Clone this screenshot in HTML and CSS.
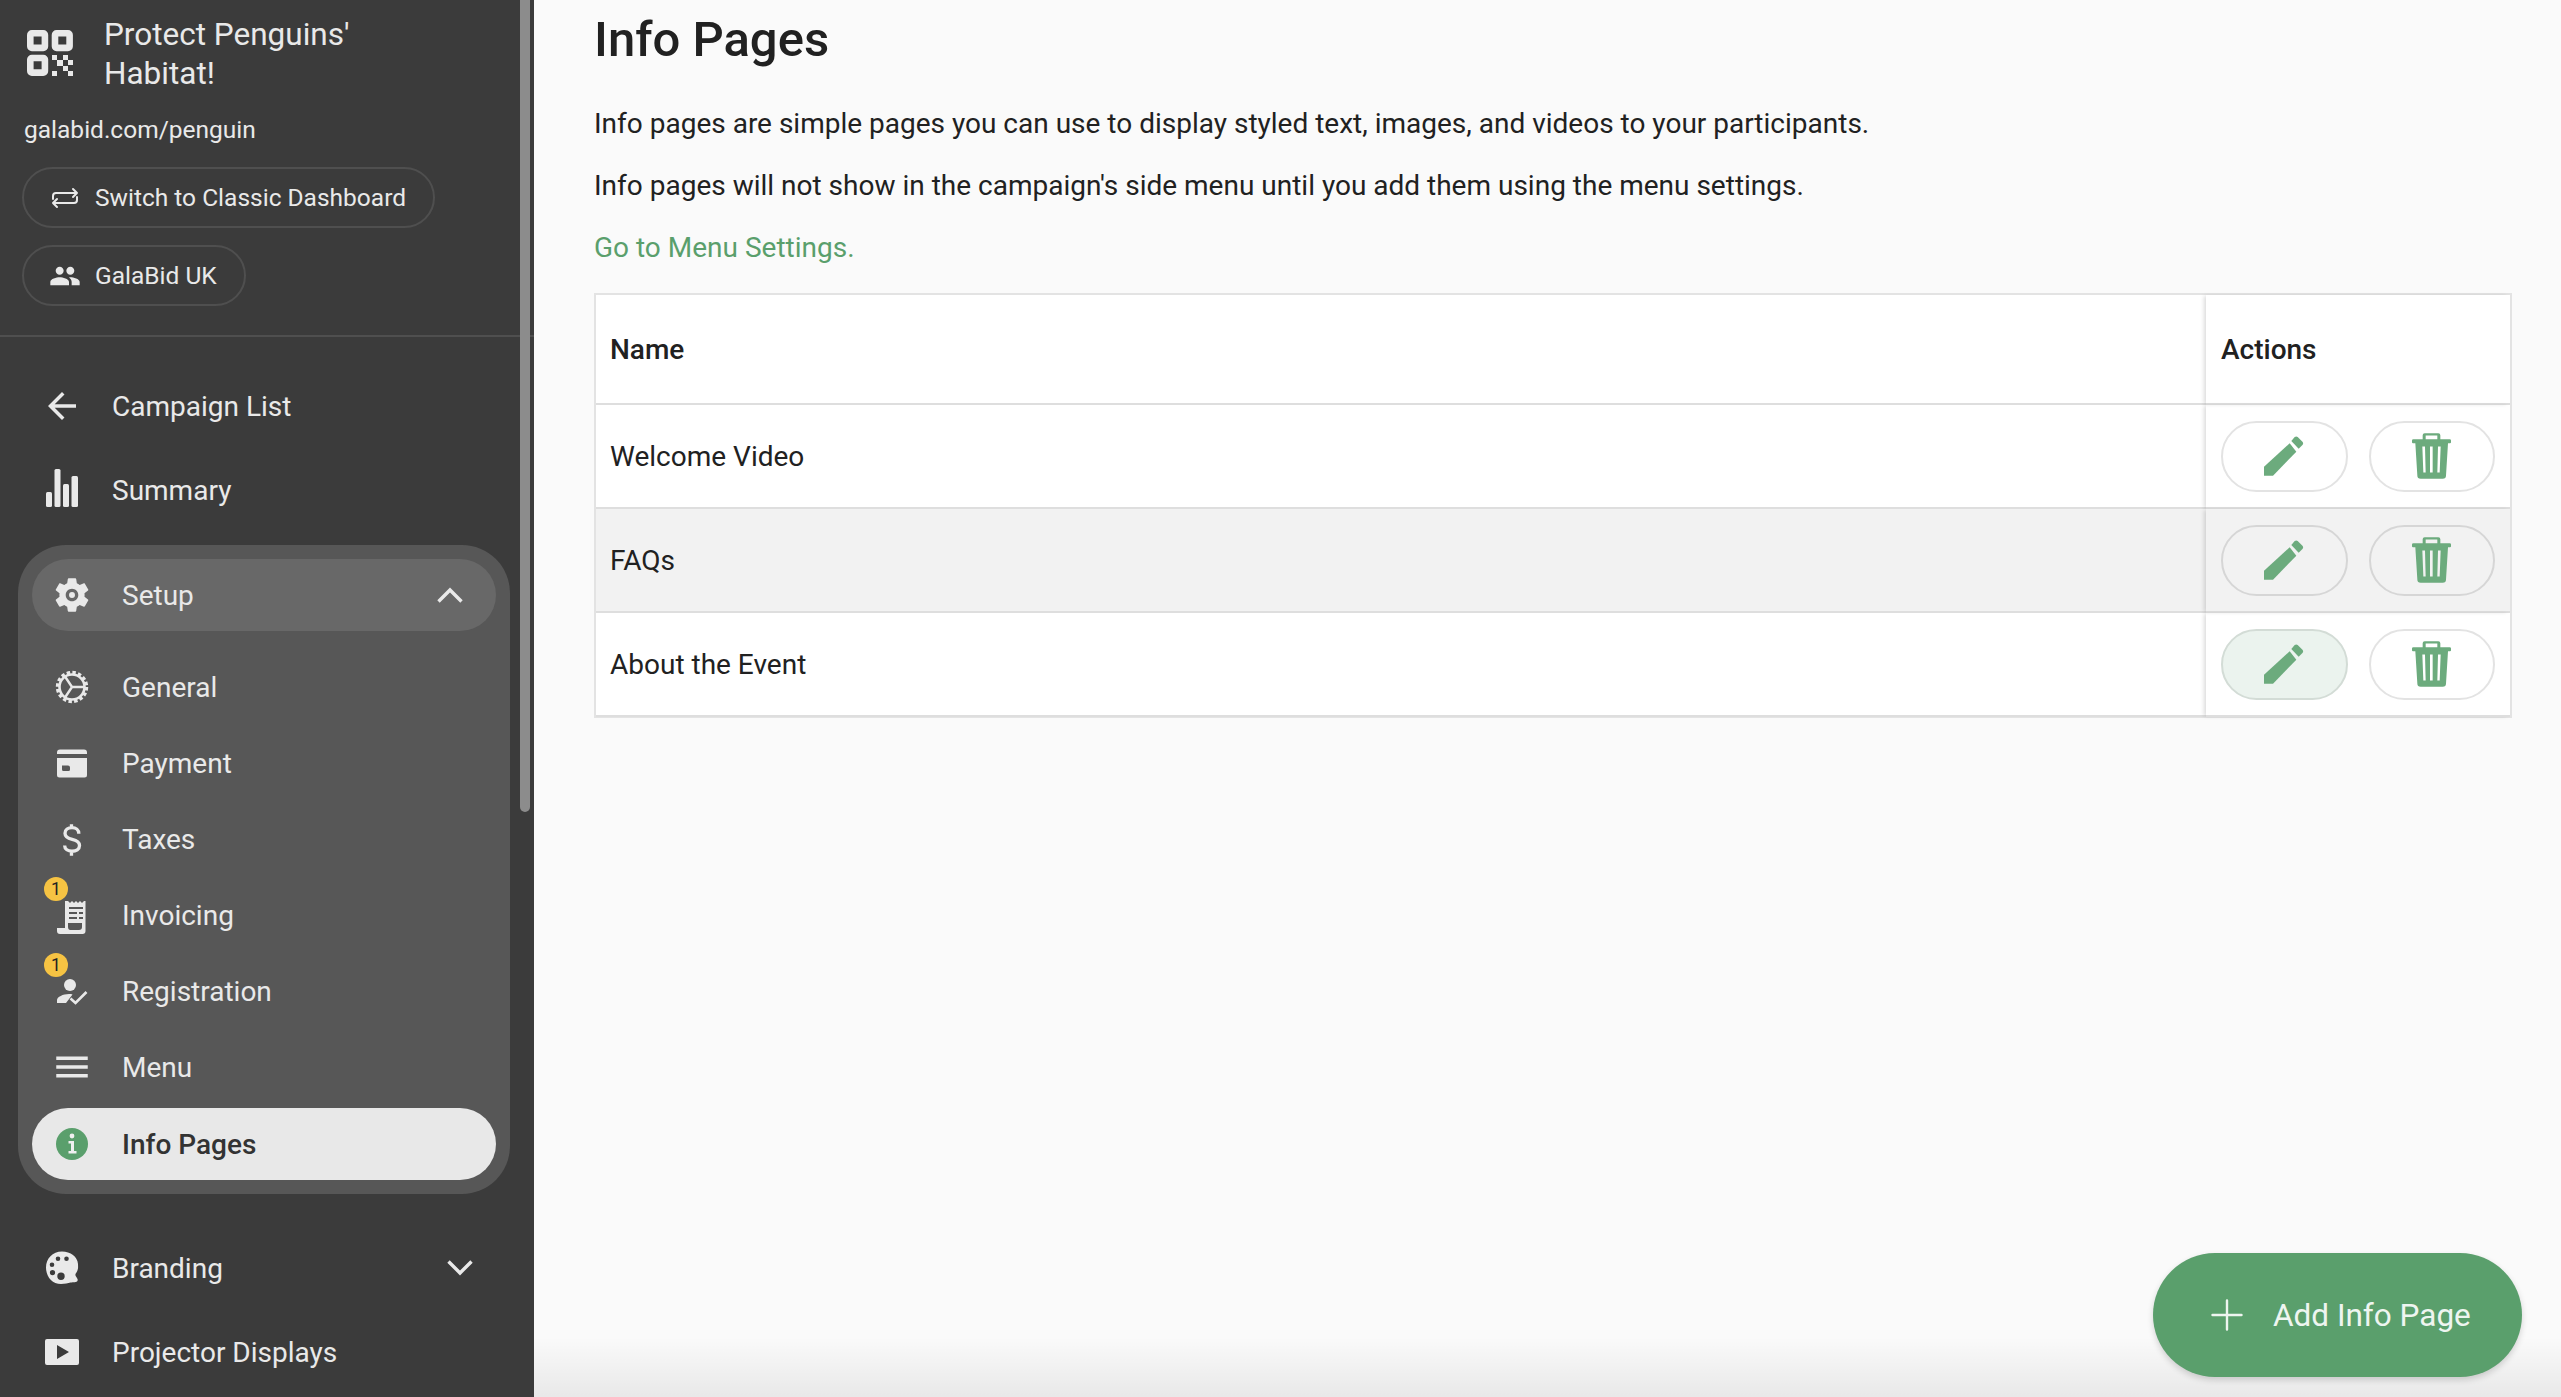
FILE: index.html
```html
<!DOCTYPE html>
<html lang="en">
<head>
<meta charset="utf-8">
<title>Info Pages</title>
<link rel="stylesheet" href="styles.css">
</head>
<body>
<div class="app">
  <aside class="sidebar">
    <div class="thumb"></div>
    <header class="brand">
      <svg class="qr" viewBox="0 0 46 46" fill="none" stroke="currentColor" stroke-width="6.6">
        <rect x="3.3" y="3.3" width="14.6" height="14.6" rx="1.6"/>
        <rect x="28" y="3.3" width="14.6" height="14.6" rx="1.6"/>
        <rect x="3.3" y="28" width="14.6" height="14.6" rx="1.6"/>
        <g fill="currentColor" stroke="none">
          <rect x="25" y="25" width="5" height="5"/><rect x="30" y="30" width="6" height="6"/><rect x="36" y="25" width="5" height="5"/>
          <rect x="41" y="25" width="5" height="0"/><rect x="25" y="41" width="5" height="5"/><rect x="36" y="36" width="5" height="5"/><rect x="41" y="41" width="5" height="5"/><rect x="41" y="30" width="5" height="5"/>
        </g>
      </svg>
      <div class="brand-title">Protect Penguins' Habitat!</div>
    </header>
    <div class="url">galabid.com/penguin</div>
    <div class="pills">
      <a class="pill">
        <svg class="pill-icon" viewBox="0 0 32 24" fill="none" stroke="currentColor" stroke-width="2" stroke-linecap="round" stroke-linejoin="round">
          <path d="M4 13v-3a3 3 0 0 1 3-3h21M24 3l4 4-4 4"/>
          <path d="M28 11v3a3 3 0 0 1-3 3H4M8 13l-4 4 4 4"/>
        </svg>
        <span>Switch to Classic Dashboard</span>
      </a>
      <a class="pill">
        <svg class="pill-icon" viewBox="0 0 24 24" fill="currentColor"><path d="M16 11c1.66 0 2.99-1.34 2.99-3S17.66 5 16 5c-1.66 0-3 1.34-3 3s1.34 3 3 3zm-8 0c1.66 0 2.99-1.34 2.99-3S9.66 5 8 5C6.34 5 5 6.34 5 8s1.34 3 3 3zm0 2c-2.33 0-7 1.17-7 3.5V19h14v-2.5c0-2.33-4.67-3.5-7-3.5zm8 0c-.29 0-.62.02-.97.05 1.16.84 1.97 1.97 1.97 3.45V19h6v-2.5c0-2.33-4.67-3.5-7-3.5z"/></svg>
        <span>GalaBid UK</span>
      </a>
    </div>
    <nav class="nav">
      <a class="top-item">
        <svg class="icon" viewBox="0 0 24 24" fill="currentColor"><path d="M20 11H7.83l5.59-5.59L12 4l-8 8 8 8 1.41-1.41L7.83 13H20v-2z"/></svg>
        <span>Campaign List</span>
      </a>
      <a class="top-item">
        <svg class="icon" viewBox="0 0 42 42" fill="currentColor"><rect x="5" y="23" width="6" height="15" rx="1.5"/><rect x="13.5" y="0" width="6" height="38" rx="1.5"/><rect x="22" y="15" width="6" height="23" rx="1.5"/><rect x="30.5" y="7" width="6.5" height="31" rx="1.5"/></svg>
        <span>Summary</span>
      </a>
      <section class="group">
        <a class="group-head">
          <svg class="icon" viewBox="0 0 24 24" fill="currentColor"><path d="M19.14 12.94c.04-.3.06-.61.06-.94 0-.32-.02-.64-.07-.94l2.03-1.58c.18-.14.23-.41.12-.61l-1.92-3.32c-.12-.22-.37-.29-.59-.22l-2.39.96c-.5-.38-1.03-.7-1.62-.94l-.36-2.54c-.04-.24-.24-.41-.48-.41h-3.84c-.24 0-.43.17-.47.41l-.36 2.54c-.59.24-1.13.57-1.62.94l-2.39-.96c-.22-.08-.47 0-.59.22L2.74 8.87c-.12.21-.08.47.12.61l2.03 1.58c-.05.3-.09.63-.09.94s.02.64.07.94l-2.03 1.58c-.18.14-.23.41-.12.61l1.92 3.32c.12.22.37.29.59.22l2.39-.96c.5.38 1.03.7 1.62.94l.36 2.54c.05.24.24.41.48.41h3.84c.24 0 .44-.17.47-.41l.36-2.54c.59-.24 1.13-.56 1.62-.94l2.39.96c.22.08.47 0 .59-.22l1.92-3.32c.12-.22.07-.47-.12-.61l-2.01-1.58zM12 15.6c-1.98 0-3.6-1.62-3.6-3.6s1.62-3.6 3.6-3.6 3.6 1.62 3.6 3.6-1.62 3.6-3.6 3.6z"/><circle cx="12" cy="12" r="1.7"/></svg>
          <span class="grow">Setup</span>
          <svg class="chev" viewBox="0 0 26 16" fill="none" stroke="currentColor" stroke-width="3.4"><path d="M1.5 14.5 13 3l11.500 11.500"/></svg>
        </a>
        <div class="sub-list">
          <a class="sub-item">
            <svg class="icon" viewBox="0 0 42 42" fill="none" stroke="currentColor"><circle cx="21" cy="21" r="12.500" stroke-width="2.600"/><circle cx="21" cy="21" r="14.500" stroke-width="3.400" stroke-dasharray="3.400 2.290"/><path d="M21 21 33 21M21 21 14 10.500M21 21 14 31.500" stroke-width="2.400"/></svg>
            <span>General</span>
          </a>
          <a class="sub-item">
            <svg class="icon" viewBox="0 0 42 42" fill="currentColor"><path fill-rule="evenodd" d="M6 10.500a3 3 0 0 1 3-3h24a3 3 0 0 1 3 3V12H6zM6 16h30v17a2.500 2.500 0 0 1-2.500 2.500h-25A2.500 2.500 0 0 1 6 33zM11 23.500v4a1.500 1.500 0 0 0 1.500 1.500h5a1.500 1.500 0 0 0 1.500-1.500v-2a2 2 0 0 0-2-2z"/></svg>
            <span>Payment</span>
          </a>
          <a class="sub-item">
            <svg class="icon" viewBox="0 0 24 24" fill="none" stroke="currentColor" stroke-width="1.900"><path d="M15.900 9c0-2.200-1.700-3.500-3.900-3.500S8 6.700 8 8.700c0 2.300 2 3 4.100 3.500s4.200 1.300 4.200 3.500c0 2.200-2 3.300-4.300 3.300s-4.200-1.200-4.200-3.300M11.700 3.500v2M11.700 19v2.500"/></svg>
            <span>Taxes</span>
          </a>
          <a class="sub-item">
            <span class="badge">1</span>
            <svg class="icon" viewBox="0 0 42 42" fill="currentColor"><path fill-rule="evenodd" d="M14 7h3l2 2 2-2 2 2 2-2 2 2 2-2 2 2 2-2h1.500v30a3 3 0 0 1-3 3H9a3 3 0 0 1-3-3v-3h8zM18 13v2h14v-2zM18 18v2h8v-2zM28 18v2h4v-2zM18 23v2h8v-2zM28 23v2h4v-2zM17 29v3.500c0 1 .3 3.500 2 3.500h9a3 3 0 0 0 3-3V29z"/></svg>
            <span>Invoicing</span>
          </a>
          <a class="sub-item">
            <span class="badge">1</span>
            <svg class="icon" viewBox="0 0 42 42" fill="currentColor"><circle cx="19" cy="15" r="6"/><path d="M6 33v-3c0-3 6-6 12-6 1.500 0 2.500.2 3.500.4L15 33z"/><path d="M19.500 28.500 24.500 33 35.500 22" fill="none" stroke="currentColor" stroke-width="2.600"/></svg>
            <span>Registration</span>
          </a>
          <a class="sub-item">
            <svg class="icon" viewBox="0 0 24 24" fill="currentColor"><path d="M3 18h18v-2H3v2zm0-5h18v-2H3v2zm0-7v2h18V6H3z"/></svg>
            <span>Menu</span>
          </a>
        </div>
        <a class="active-item">
          <svg class="icon" viewBox="0 0 42 42"><circle cx="21" cy="21" r="16" fill="#5a9f6c"/><g fill="#f0f0f0"><circle cx="21" cy="13" r="2.400"/><path d="M17.500 18h5.500v10h2.500v2.500h-8V28H20v-7.500h-2.500z"/></g></svg>
          <span>Info Pages</span>
        </a>
      </section>
      <a class="top-item spaced">
        <svg class="icon" viewBox="0 0 42 42" fill="currentColor"><path fill-rule="evenodd" d="M21 4.500C11.500 4.500 5 11.500 5 20.500S11 37 20 37c4 0 7-1 9.500-1.500 3-.6 6 .2 7-1.800.8-1.600-.8-3-1.800-4.700-.9-1.700.4-2.800 1.300-4.500C37.500 22 37 19 37 17 36.500 9.500 29.500 4.500 21 4.500zM17 9.500a2.300 2.300 0 1 1 0 4.600 2.300 2.300 0 0 1 0-4.600zM25.500 9.500a2.300 2.300 0 1 1 0 4.600 2.300 2.300 0 0 1 0-4.600zM11 15.500a2.300 2.300 0 1 1 0 4.600 2.300 2.300 0 0 1 0-4.600zM11.500 23a2.600 2.600 0 1 1 0 5.200 2.600 2.600 0 0 1 0-5.200zM20 25.500a3.700 3.700 0 1 1 0 7.400 3.700 3.700 0 0 1 0-7.400z"/></svg>
        <span class="grow">Branding</span>
        <svg class="chev" viewBox="0 0 26 16" fill="none" stroke="currentColor" stroke-width="3.400"><path d="M1.500 1.500 13 13 24.500 1.500"/></svg>
      </a>
      <a class="top-item">
        <svg class="icon" viewBox="0 0 42 42" fill="currentColor"><path fill-rule="evenodd" d="M6 8h30a2 2 0 0 1 2 2v22a2 2 0 0 1-2 2H6a2 2 0 0 1-2-2V10a2 2 0 0 1 2-2zM16 14v14l12-7z"/></svg>
        <span>Projector Displays</span>
      </a>
    </nav>
  </aside>

  <main class="main">
    <h1 class="title">Info Pages</h1>
    <p class="copy">Info pages are simple pages you can use to display styled text, images, and videos to your participants.</p>
    <p class="copy">Info pages will not show in the campaign's side menu until you add them using the menu settings.</p>
    <p class="copy"><a class="link">Go to Menu Settings.</a></p>
    <table class="table">
      <thead>
        <tr><th>Name</th><th class="actions">Actions</th></tr>
      </thead>
      <tbody>
        <tr>
          <td>Welcome Video</td>
          <td class="actions"><div class="btns">
            <button class="round"><svg class="pencil" viewBox="0 0 120 120"><path d="M0 92V119H27L97 47 77 22Z"/><path d="M82 15 92 3Q97 0 101 3L116 18Q119 22 116 26L104 38Z"/></svg></button>
            <button class="round"><svg class="trash" viewBox="0 0 117 137"><path fill-rule="evenodd" d="M38 0h41a6 6 0 0 1 6 6v12h28a4 4 0 0 1 4 4v5a3 3 0 0 1-3 3h-6l-6 97a10 10 0 0 1-10 10H26a10 10 0 0 1-10-10L10 30H3a3 3 0 0 1-3-3v-5a4 4 0 0 1 4-4h28V6a6 6 0 0 1 6-6zM41 7v11h35V7zM31 40l3 78h7l-2-78zM54 40v78h8V40zM78 40l-2 78h7l3-78z"/></svg></button>
          </div></td>
        </tr>
        <tr class="shaded">
          <td>FAQs</td>
          <td class="actions"><div class="btns">
            <button class="round"><svg class="pencil" viewBox="0 0 120 120"><path d="M0 92V119H27L97 47 77 22Z"/><path d="M82 15 92 3Q97 0 101 3L116 18Q119 22 116 26L104 38Z"/></svg></button>
            <button class="round"><svg class="trash" viewBox="0 0 117 137"><path fill-rule="evenodd" d="M38 0h41a6 6 0 0 1 6 6v12h28a4 4 0 0 1 4 4v5a3 3 0 0 1-3 3h-6l-6 97a10 10 0 0 1-10 10H26a10 10 0 0 1-10-10L10 30H3a3 3 0 0 1-3-3v-5a4 4 0 0 1 4-4h28V6a6 6 0 0 1 6-6zM41 7v11h35V7zM31 40l3 78h7l-2-78zM54 40v78h8V40zM78 40l-2 78h7l3-78z"/></svg></button>
          </div></td>
        </tr>
        <tr>
          <td>About the Event</td>
          <td class="actions"><div class="btns">
            <button class="round hover"><svg class="pencil" viewBox="0 0 120 120"><path d="M0 92V119H27L97 47 77 22Z"/><path d="M82 15 92 3Q97 0 101 3L116 18Q119 22 116 26L104 38Z"/></svg></button>
            <button class="round"><svg class="trash" viewBox="0 0 117 137"><path fill-rule="evenodd" d="M38 0h41a6 6 0 0 1 6 6v12h28a4 4 0 0 1 4 4v5a3 3 0 0 1-3 3h-6l-6 97a10 10 0 0 1-10 10H26a10 10 0 0 1-10-10L10 30H3a3 3 0 0 1-3-3v-5a4 4 0 0 1 4-4h28V6a6 6 0 0 1 6-6zM41 7v11h35V7zM31 40l3 78h7l-2-78zM54 40v78h8V40zM78 40l-2 78h7l3-78z"/></svg></button>
          </div></td>
        </tr>
      </tbody>
    </table>
    <button class="fab">
      <svg class="plus" viewBox="0 0 32 32" fill="none" stroke="currentColor" stroke-width="2.400" stroke-linecap="round"><path d="M16 1.500v29M1.500 16h29"/></svg>
      <span>Add Info Page</span>
    </button>
  </main>
</div>
</body>
</html>
```

FILE: styles.css
```css
* { box-sizing: border-box; }

html, body {
  margin: 0;
  height: 100%;
  overflow: hidden;
}

body {
  font-family: Roboto, "Liberation Sans", sans-serif;
  font-size: 28px;
  color: #212121;
  background: #fafafa;
}

.app {
  display: flex;
  height: 100vh;
}

/* Sidebar */
.sidebar {
  position: relative;
  flex: none;
  width: 534px;
  height: 100%;
  padding-top: 14px;
  overflow: hidden;
  color: #e9e9e9;
  background: #3b3b3b;
  z-index: 2;
}

.thumb {
  position: absolute;
  top: 0;
  left: 520px;
  width: 10px;
  height: 812px;
  border-radius: 0 0 5px 5px;
  background: #8c8c8c;
  z-index: 3;
}

.brand {
  display: flex;
  align-items: center;
  gap: 31px;
  padding-left: 27px;
  height: 79px;
}

.qr {
  flex: none;
  width: 46px;
  height: 46px;
  margin-top: -1px;
  color: #e9e9e9;
}

.brand-title {
  width: 300px;
  font-size: 31.5px;
  line-height: 39px;
}

.url {
  margin-top: 20px;
  padding-left: 24px;
  font-size: 24.5px;
  line-height: 34px;
}

.pills {
  display: flex;
  flex-direction: column;
  align-items: flex-start;
  gap: 17px;
  margin-top: 20px;
  padding: 0 0 29px 22px;
  border-bottom: 2px solid #4f4f4f;
}

.sidebar .pills {
  margin-right: 0;
}

.pill {
  display: flex;
  align-items: center;
  gap: 14px;
  height: 61px;
  padding: 0 27px 0 25px;
  border: 2px solid #4f4f4f;
  border-radius: 31px;
  font-size: 24.5px;
}

.pill-icon {
  flex: none;
  width: 32px;
  height: 32px;
}

.nav {
  padding-top: 27px;
}

.icon {
  flex: none;
  width: 42px;
  height: 42px;
}

.grow {
  flex: 1;
}

.chev {
  flex: none;
  width: 26px;
  height: 16px;
}

.top-item {
  display: flex;
  align-items: center;
  gap: 29px;
  height: 84px;
  padding: 0 61px 0 41px;
}

.top-item.spaced {
  margin-top: 32px;
}

.group {
  margin: 13px 24px 0 18px;
  padding: 14px;
  border-radius: 48px;
  background: #575757;
}

.group-head {
  display: flex;
  align-items: center;
  gap: 29px;
  height: 72px;
  padding: 0 33px 0 19px;
  border-radius: 36px;
  background: #686868;
}

.sub-list {
  margin-top: 18px;
}

.sub-item {
  position: relative;
  display: flex;
  align-items: center;
  gap: 29px;
  height: 76px;
  padding-left: 19px;
}

.badge {
  position: absolute;
  top: 0;
  left: 12px;
  width: 24px;
  height: 24px;
  border-radius: 50%;
  font-size: 17.5px;
  line-height: 24px;
  text-align: center;
  color: #222;
  background: #f6c343;
  z-index: 1;
}

.active-item {
  display: flex;
  align-items: center;
  gap: 29px;
  height: 72px;
  margin-top: 3px;
  padding-left: 19px;
  border-radius: 36px;
  font-weight: 500;
  color: #333;
  background: #e8e8e8;
}

/* Main */
.main {
  position: relative;
  flex: 1;
  min-width: 0;
  height: 100%;
  padding: 12px 49px 0 60px;
}

.main::after {
  content: "";
  position: absolute;
  left: 0;
  right: 0;
  bottom: 0;
  height: 60px;
  background: linear-gradient(to bottom, rgba(0, 0, 0, 0), rgba(0, 0, 0, .07));
  pointer-events: none;
}

.title {
  margin: 0 0 35px;
  font-size: 49px;
  font-weight: 500;
  line-height: 56px;
}

.copy {
  margin: 0 0 20px;
  line-height: 42px;
}

.copy:last-of-type {
  margin-bottom: 24px;
}

.link {
  color: #5a9f6c;
}

.table {
  width: 100%;
  border: 2px solid #e3e3e3;
  border-bottom-width: 1px;
  border-spacing: 0;
  border-collapse: separate;
  background: #fff;
  table-layout: fixed;
}

.table th,
.table td {
  padding: 0 14px;
  border-bottom: 2px solid #dedede;
  text-align: left;
  font-weight: 400;
}

.table th {
  height: 110px;
  font-weight: 500;
}

.table td {
  height: 104px;
}

.table th.actions,
.table td.actions {
  width: 304px;
  padding: 0 15px;
  box-shadow: -3px 0 4px -1px rgba(0, 0, 0, .14);
}

.shaded td {
  background: #f2f2f2;
}

.btns {
  display: flex;
  gap: 21px;
}

.round {
  display: flex;
  align-items: center;
  justify-content: center;
  width: 127px;
  height: 71px;
  padding: 0;
  border: 2px solid #e3e3e3;
  border-radius: 36px;
  background: transparent;
}

.shaded .round {
  border-color: #d6d6d6;
}

.round.hover {
  border-color: #d3dcd6;
  background: #ebf3ee;
}

.pencil {
  width: 40px;
  height: 40px;
  fill: #6cab7d;
}

.trash {
  width: 39px;
  height: 46px;
  fill: #6cab7d;
}

.fab {
  position: absolute;
  right: 39px;
  bottom: 20px;
  display: flex;
  align-items: center;
  gap: 30px;
  width: 369px;
  height: 124px;
  padding: 0 0 0 58px;
  border: 0;
  border-radius: 62px;
  font-family: inherit;
  font-size: 31.5px;
  color: #eef5f0;
  background: #5a9f6c;
  box-shadow: 0 3px 6px rgba(0, 0, 0, .16);
  z-index: 1;
}

.plus {
  flex: none;
  width: 32px;
  height: 32px;
}
```
